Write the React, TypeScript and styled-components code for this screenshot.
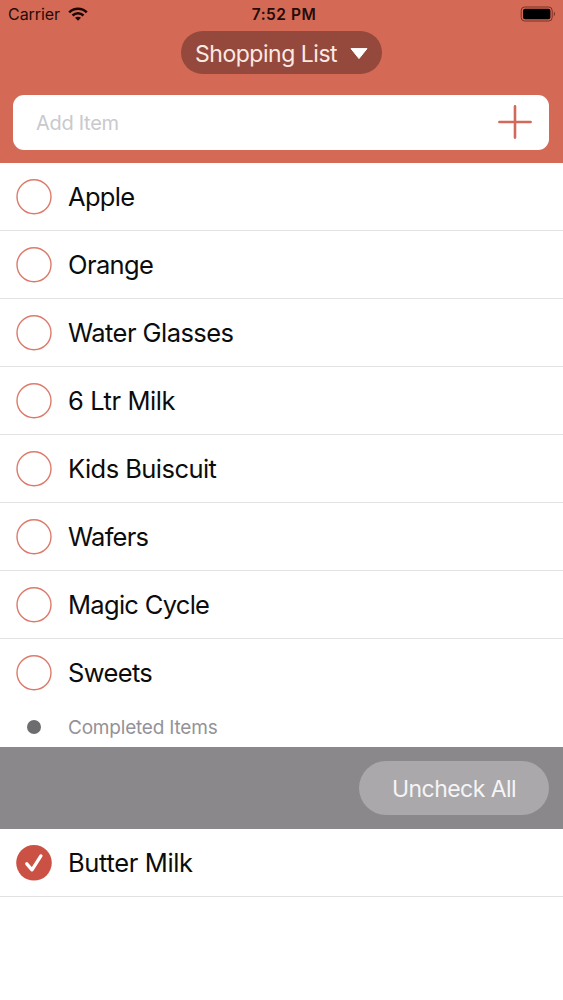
import React from "react";
import styled, { createGlobalStyle } from "styled-components";

const GlobalStyle = createGlobalStyle`
  * { box-sizing: border-box; }
  body {
    margin: 0;
    background: #fff;
    font-family: Inter, "Liberation Sans", sans-serif;
    font-optical-sizing: none;
  }
  button, input { font: inherit; border: 0; padding: 0; background: none; }
`;

const Screen = styled.main`
  height: 1000px;
  overflow: hidden;
  background: #fff;
`;

const Header = styled.header`
  height: 163px;
  background: #d46a55;
  display: flex;
  flex-direction: column;
`;

const StatusBar = styled.div`
  height: 31px;
  flex: none;
  padding: 0 7px 3px 8px;
  display: grid;
  grid-template-columns: 1fr auto 1fr;
  align-items: center;
  color: #260b08;
  font-size: 16px;
`;

const Carrier = styled.div`
  display: flex;
  align-items: center;
  gap: 8px;
  letter-spacing: -0.05px;
`;

const Clock = styled.div`
  font-weight: 600;
  font-size: 15.5px;
  letter-spacing: 0.5px;
  padding-left: 4px;
`;

const Battery = styled.svg`
  justify-self: end;
`;

const ListPicker = styled.button`
  align-self: center;
  width: 201px;
  height: 43px;
  flex: none;
  border-radius: 22px;
  background: #95483c;
  color: #fbe9e4;
  font-size: 23px;
  letter-spacing: -0.47px;
  display: flex;
  align-items: center;
  padding: 2px 14px 0 14px;
  justify-content: space-between;
  white-space: nowrap;
`;

const AddBar = styled.form`
  margin: 21px 14px 0 13px;
  height: 55px;
  border-radius: 11px;
  background: #fff;
  display: flex;
  align-items: center;
  justify-content: space-between;
  padding: 0 17px 0 23px;
`;

const AddInput = styled.input`
  width: 300px;
  font-size: 20px;
  letter-spacing: -0.3px;
  outline: none;
  &::placeholder { color: #c9c9cd; opacity: 1; }
`;

const AddButton = styled.button`
  display: flex;
  margin-top: -1px;
`;

const List = styled.ul`
  margin: 0;
  padding: 0;
  list-style: none;
`;

const Row = styled.li<{ $divider?: boolean }>`
  height: 68px;
  display: flex;
  align-items: center;
  gap: 16px;
  padding: 1px 0 0 16px;
  border-bottom: 1px solid ${(p) => (p.$divider ? "#e2e2e4" : "transparent")};
`;

const ItemName = styled.span<{ $spacing: number }>`
  margin-bottom: 2px;
  font-size: 25.5px;
  letter-spacing: ${(p) => p.$spacing}px;
  color: #0c0c0d;
  white-space: nowrap;
`;

const SectionLabel = styled.div`
  height: 40px;
  display: flex;
  align-items: center;
  gap: 27px;
  padding-left: 27px;
  color: #949298;
  font-size: 19px;
  letter-spacing: -0.2px;
`;

const Dot = styled.span`
  width: 14px;
  height: 14px;
  border-radius: 50%;
  background: #6d6d6f;
`;

const ActionBar = styled.div`
  height: 82px;
  background: #8a888b;
  display: flex;
  align-items: center;
  justify-content: flex-end;
  padding-right: 14px;
`;

const UncheckButton = styled.button`
  width: 190px;
  height: 54px;
  border-radius: 27px;
  background: #aaa8ab;
  color: #f5f5f6;
  font-size: 23px;
  letter-spacing: -0.55px;
  padding-top: 2px;
  white-space: nowrap;
`;

const OpenCircle = () => (
  <svg width="36" height="36" viewBox="0 0 36 36" fill="none">
    <circle cx="18" cy="17.7" r="17" stroke="#dc7a6a" strokeWidth="1.4" />
  </svg>
);

const CheckedCircle = () => (
  <svg width="36" height="36" viewBox="0 0 36 36" fill="none">
    <circle cx="18" cy="17.8" r="17.8" fill="#cb5145" />
    <path d="M10.8 18.8 L16 24.8 L24.9 10.9" stroke="#fff" strokeWidth="3.3" strokeLinecap="round" strokeLinejoin="round" />
  </svg>
);

const WifiIcon = () => (
  <svg width="20" height="14" viewBox="0 0 20 14" fill="none" stroke="#1c0503" strokeWidth="2.5">
    <path d="M1.2 5.3 C6.2 0.4 13.8 0.4 18.8 5.3" />
    <path d="M4.5 8.5 C7.7 5.5 12.3 5.5 15.5 8.5" />
    <path d="M10 13.7 L7 10.8 C8.7 9.3 11.3 9.3 13 10.8 Z" fill="#1c0503" stroke="none" />
  </svg>
);

const openItems = [
  { name: "Apple", spacing: -0.7 },
  { name: "Orange", spacing: -0.6 },
  { name: "Water Glasses", spacing: -0.55 },
  { name: "6 Ltr Milk", spacing: -0.42 },
  { name: "Kids Buiscuit", spacing: -0.55 },
  { name: "Wafers", spacing: -0.75 },
  { name: "Magic Cycle", spacing: -0.7 },
  { name: "Sweets", spacing: -0.65 },
];

export default function App() {
  return (
    <Screen>
      <GlobalStyle />
      <Header>
        <StatusBar>
          <Carrier>
            <span>Carrier</span>
            <WifiIcon />
          </Carrier>
          <Clock>7:52 PM</Clock>
          <Battery width="36" height="16" viewBox="0 0 36 16" fill="none">
            <rect x="1.2" y="1" width="31" height="14" rx="3.5" stroke="#7c2f23" />
            <rect x="3" y="2.8" width="27.4" height="10.4" rx="2" fill="#000" />
            <path d="M33.8 5.6 C35.4 6.4 35.4 9.6 33.8 10.4 Z" fill="#7c2f23" />
          </Battery>
        </StatusBar>
        <ListPicker type="button">
          <span>Shopping List</span>
          <svg width="18" height="12" viewBox="0 0 18 12">
            <path d="M1 0.6 H17 L9 10.6 Z" fill="#fff" stroke="#fff" strokeWidth="1" strokeLinejoin="round" />
          </svg>
        </ListPicker>
        <AddBar>
          <AddInput placeholder="Add Item" />
          <AddButton type="button" aria-label="Add">
            <svg width="34" height="34" viewBox="0 0 34 34" stroke="#d2695a" strokeWidth="2.6" strokeLinecap="round">
              <path d="M17 1.4 V32.6 M1.4 17 H32.6" />
            </svg>
          </AddButton>
        </AddBar>
      </Header>
      <List>
        {openItems.map((item, i) => (
          <Row key={item.name} $divider={i < openItems.length - 1}>
            <OpenCircle />
            <ItemName $spacing={item.spacing}>{item.name}</ItemName>
          </Row>
        ))}
      </List>
      <SectionLabel>
        <Dot />
        <span>Completed Items</span>
      </SectionLabel>
      <ActionBar>
        <UncheckButton type="button">Uncheck All</UncheckButton>
      </ActionBar>
      <List>
        <Row $divider>
          <CheckedCircle />
          <ItemName $spacing={-0.35}>Butter Milk</ItemName>
        </Row>
      </List>
    </Screen>
  );
}
